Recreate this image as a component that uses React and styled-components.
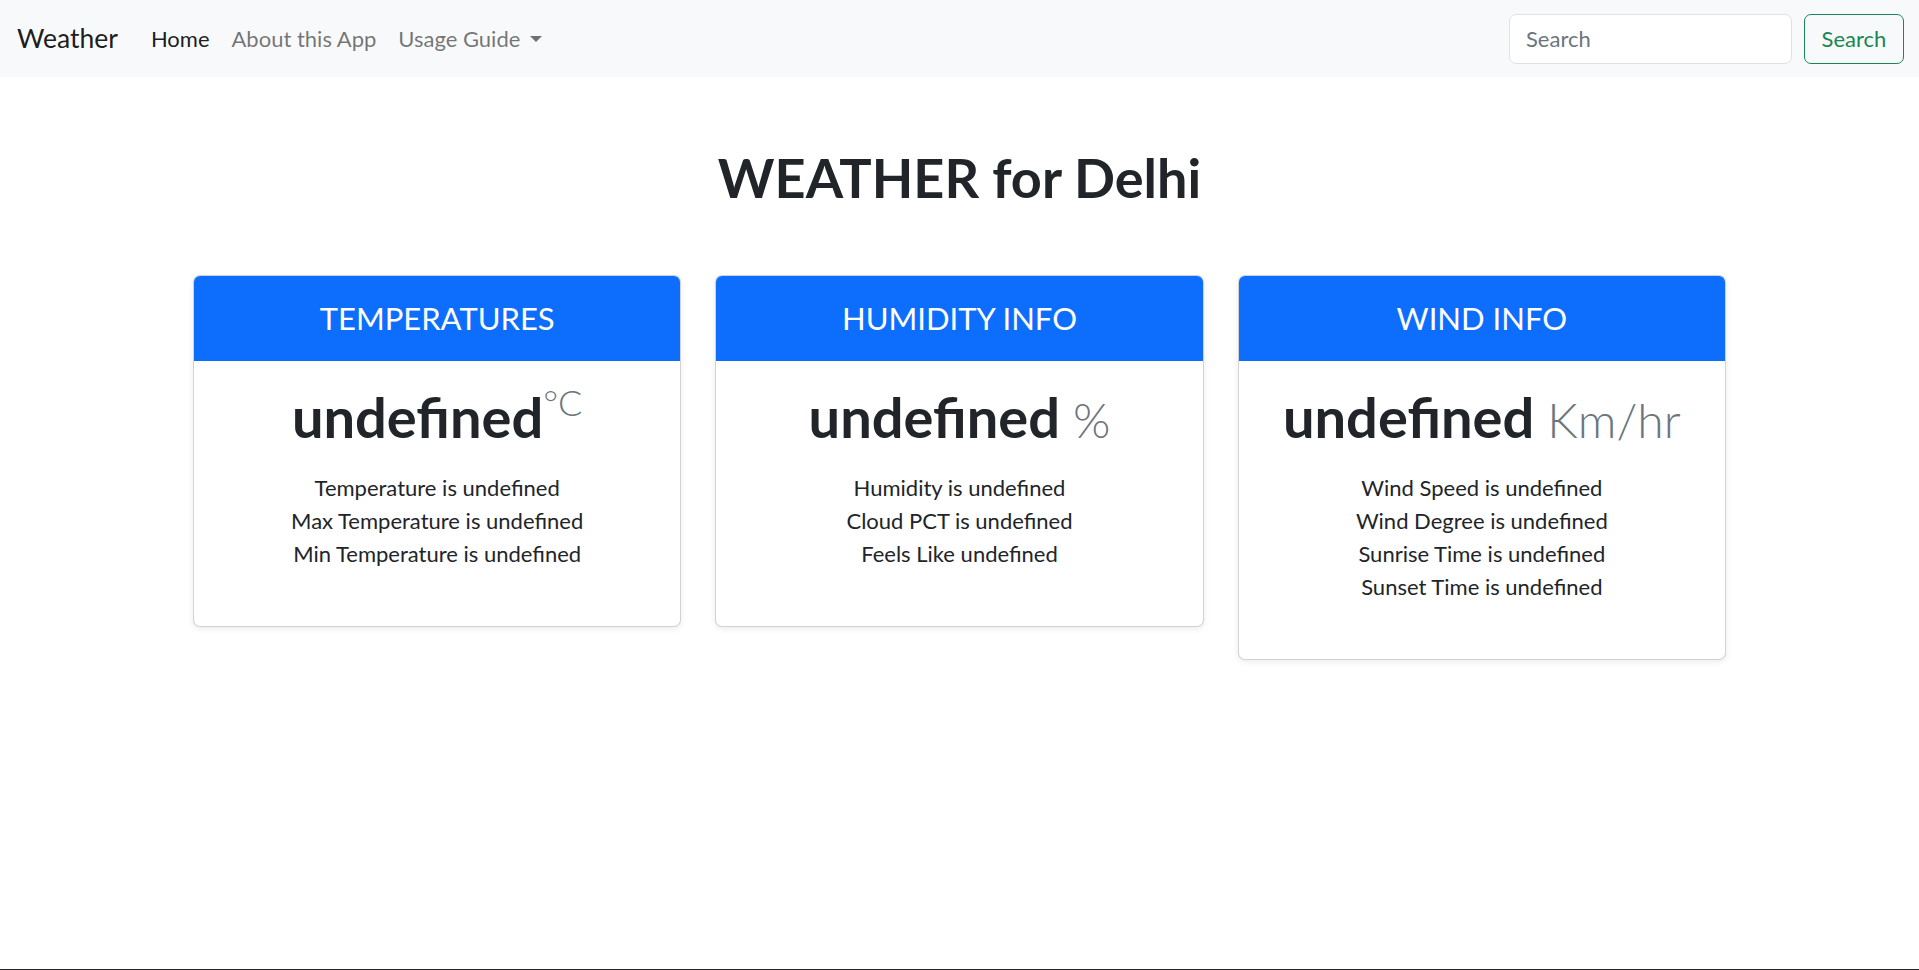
import styled, { createGlobalStyle } from "styled-components";

const GlobalStyle = createGlobalStyle`
  html, body {
    margin: 0;
    padding: 0;
    background: #fff;
  }
  body {
    font-family: Lato, "Noto Sans", sans-serif;
    font-size: 22px;
    line-height: 1.5;
    color: #212529;
  }
  * {
    box-sizing: border-box;
  }
`;

const Page = styled.div`
  min-height: 970px;
  border-bottom: 1px solid #212529;
`;

const Navbar = styled.nav`
  height: 77px;
  display: flex;
  align-items: center;
  padding: 0 15px 0 17px;
  background: #f8f9fa;
`;

const Brand = styled.a`
  font-size: 26.5px;
  color: rgba(0, 0, 0, 0.9);
  text-decoration: none;
  margin-right: 22px;
`;

const NavList = styled.ul`
  display: flex;
  list-style: none;
  margin: 0;
  padding: 0;
`;

const NavLink = styled.a`
  display: flex;
  align-items: center;
  padding: 0 11px;
  font-size: 22px;
  color: ${(p) => (p.$active ? "rgba(0, 0, 0, 0.9)" : "rgba(0, 0, 0, 0.55)")};
  text-decoration: none;
  cursor: pointer;
`;

const Caret = styled.span`
  display: inline-block;
  margin-left: 10px;
  border-top: 6.5px solid currentColor;
  border-left: 6px solid transparent;
  border-right: 6px solid transparent;
`;

const SearchForm = styled.form`
  margin-left: auto;
  display: flex;
  gap: 12px;
`;

const SearchInput = styled.input`
  width: 283px;
  height: 50px;
  padding: 0 16px;
  font-family: inherit;
  font-size: 22px;
  color: #212529;
  background: #fff;
  border: 1px solid #dee2e6;
  border-radius: 7px;
  outline: none;
  &::placeholder {
    color: #6c757d;
  }
`;

const SearchButton = styled.button`
  width: 100px;
  height: 50px;
  font-family: inherit;
  font-size: 22px;
  color: #198754;
  background: transparent;
  border: 1px solid #198754;
  border-radius: 7px;
  cursor: pointer;
`;

const Main = styled.main`
  width: 1533px;
  margin: 0 auto;
`;

const Title = styled.h1`
  margin: 0;
  padding: 69px 0 64px;
  text-align: center;
  font-size: 54px;
  font-weight: 700;
  line-height: 1.2;
`;

const CardRow = styled.div`
  display: grid;
  grid-template-columns: repeat(3, 1fr);
  gap: 34px;
  align-items: start;
`;

const Card = styled.div`
  background: #fff;
  border: 1px solid rgba(0, 0, 0, 0.175);
  border-radius: 7px;
  overflow: hidden;
  box-shadow: 0 2px 6px rgba(0, 0, 0, 0.08);
`;

const CardHeader = styled.div`
  height: 86px;
  display: flex;
  align-items: center;
  justify-content: center;
  background: #0d6efd;
  color: #fff;
  font-size: 31px;
  margin: -1px -1px 0;
`;

const CardBody = styled.div`
  padding: 22px 22px 56px;
  text-align: center;
`;

const Value = styled.div`
  font-size: 56px;
  font-weight: 700;
  line-height: 1.2;
  margin-bottom: 21px;
`;

const Unit = styled.span`
  font-size: ${(p) => (p.$sup ? "36px" : "48px")};
  font-weight: 300;
  color: #6c757d;
  vertical-align: ${(p) => (p.$sup ? "22px" : "baseline")};
  line-height: 0;
`;

const Line = styled.div`
  font-size: 22px;
  line-height: 33px;
`;

const cards = [
  {
    title: "TEMPERATURES",
    unit: "°C",
    sup: true,
    lines: [
      "Temperature is undefined",
      "Max Temperature is undefined",
      "Min Temperature is undefined",
    ],
  },
  {
    title: "HUMIDITY INFO",
    unit: " %",
    lines: ["Humidity is undefined", "Cloud PCT is undefined", "Feels Like undefined"],
  },
  {
    title: "WIND INFO",
    unit: " Km/hr",
    lines: [
      "Wind Speed is undefined",
      "Wind Degree is undefined",
      "Sunrise Time is undefined",
      "Sunset Time is undefined",
    ],
  },
];

const App = () => {
  return (
    <Page>
      <GlobalStyle />
      <Navbar>
        <Brand href="#">Weather</Brand>
        <NavList>
          <li>
            <NavLink $active>Home</NavLink>
          </li>
          <li>
            <NavLink>About this App</NavLink>
          </li>
          <li>
            <NavLink>
              Usage Guide
              <Caret />
            </NavLink>
          </li>
        </NavList>
        <SearchForm onSubmit={(e) => e.preventDefault()}>
          <SearchInput type="search" placeholder="Search" />
          <SearchButton type="submit">Search</SearchButton>
        </SearchForm>
      </Navbar>
      <Main>
        <Title>WEATHER for Delhi</Title>
        <CardRow>
          {cards.map((c) => (
            <Card key={c.title}>
              <CardHeader>{c.title}</CardHeader>
              <CardBody>
                <Value>
                  undefined
                  {c.sup ? (
                    <Unit $sup>{c.unit}</Unit>
                  ) : (
                    <Unit>{c.unit}</Unit>
                  )}
                </Value>
                {c.lines.map((l) => (
                  <Line key={l}>{l}</Line>
                ))}
              </CardBody>
            </Card>
          ))}
        </CardRow>
      </Main>
    </Page>
  );
};

export default App;
